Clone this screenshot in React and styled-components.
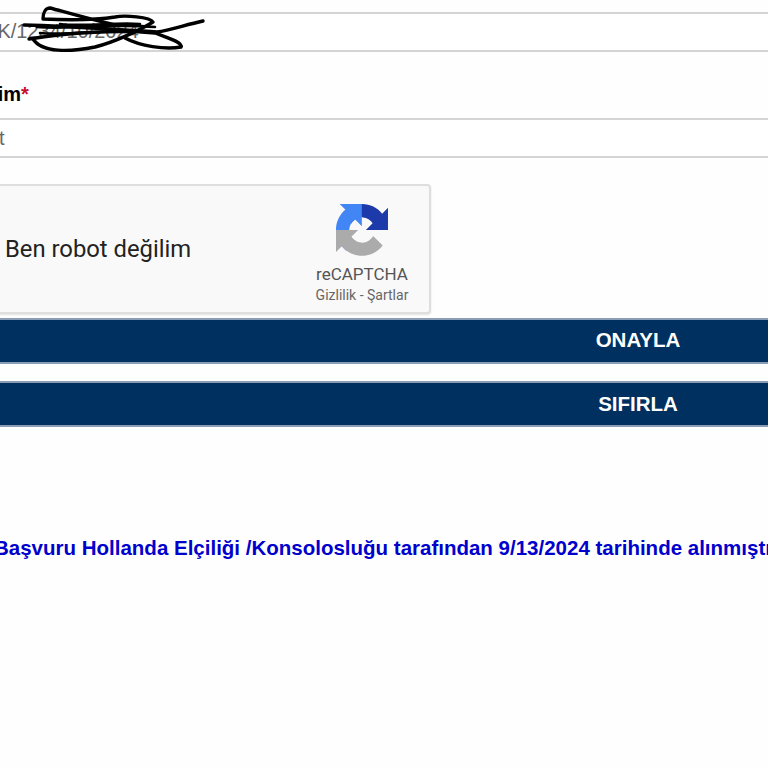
import React from 'react';
import styled, { createGlobalStyle } from 'styled-components';

const GlobalStyle = createGlobalStyle`
  * {
    margin: 0;
    padding: 0;
    box-sizing: border-box;
  }
  html, body {
    width: 768px;
    height: 768px;
    overflow: hidden;
    background: #fefefe;
    font-family: 'Liberation Sans', Arial, sans-serif;
  }
`;

const Viewport = styled.div`
  width: 768px;
  height: 768px;
  overflow: hidden;
`;

/* the form is wider than the window, it was cropped in the screenshot */
const Form = styled.form`
  display: flex;
  flex-direction: column;
  width: 1356px;
  margin-left: -40px;
  padding-top: 12px;
`;

const FieldWrap = styled.div`
  position: relative;
`;

const TextInput = styled.input`
  display: block;
  width: 100%;
  height: 40px;
  padding-left: ${(p) => p.$indent}px;
  padding-bottom: ${(p) => p.$lift || 0}px;
  border: none;
  border-top: 2px solid #d4d4d4;
  border-bottom: 2px solid #d4d4d4;
  outline: none;
  background: #fff;
  font-family: inherit;
  font-size: 20px;
  color: #666;
`;

const Scribble = styled.svg`
  position: absolute;
  top: -12px;
  left: 40px;
  width: 210px;
  height: 64px;
  pointer-events: none;
`;

const Label = styled.label`
  display: block;
  margin-top: 31px;
  height: 35px;
  padding-left: 21px;
  font-size: 20px;
  line-height: 23px;
  font-weight: 700;
  color: #000;
`;

const Required = styled.span`
  color: #c8102e;
  font-weight: 700;
`;

const CaptchaBox = styled.div`
  display: flex;
  align-items: stretch;
  justify-content: space-between;
  width: 471px;
  height: 130px;
  margin-top: 26px;
  margin-bottom: 1px;
  padding-left: 43px;
  background: #f9f9f9;
  border: 2px solid #dedede;
  border-radius: 4px;
  box-shadow: 0 1px 2px rgba(0, 0, 0, 0.12);
  font-family: Roboto, 'Liberation Sans', sans-serif;
`;

const CaptchaText = styled.span`
  align-self: center;
  font-size: 23.8px;
  color: #222;
`;

const CaptchaBrand = styled.div`
  display: flex;
  flex-direction: column;
  align-items: center;
  width: 134px;
  padding-top: 18px;
`;

const BrandName = styled.span`
  margin-top: 8px;
  font-size: 17px;
  line-height: 20px;
  color: #555;
`;

const BrandLinks = styled.span`
  margin-top: 3px;
  font-size: 14px;
  line-height: 16px;
  color: #666;
`;

const Bar = styled.button`
  display: block;
  width: 100%;
  height: 46px;
  margin-top: ${(p) => p.$gap}px;
  padding-bottom: ${(p) => p.$lift || 0}px;
  border: none;
  border-top: 2px solid #8b9db4;
  border-bottom: 2px solid #8b9db4;
  background: #003060;
  color: #fff;
  font-family: inherit;
  font-size: 20.5px;
  font-weight: 700;
`;

const Notice = styled.p`
  margin-top: 109px;
  padding-left: 34px;
  white-space: nowrap;
  font-size: 20.5px;
  line-height: 24px;
  font-weight: 700;
  color: #0000cd;
`;

const RecaptchaLogo = () => (
  <svg width="52" height="52" viewBox="0 0 64 64">
    <path fill="#1c3aa9" d="M64 31.955l-.033-1.37V4.687l-7.16 7.16C50.948 4.674 42.033.093 32.05.093 21.64.093 12.39 5.05 6.544 12.727l11.736 11.86a15.55 15.55 0 0 1 4.753-5.333c2.05-1.6 4.952-2.906 8.99-2.906.488 0 .864.057 1.14.164 5.002.395 9.338 3.152 11.89 7.15l-8.307 8.307c10.522-.04 22.408-.065 32.246-.014" />
    <path fill="#4285f4" d="M31.8.002l-1.37.033H4.53l7.16 7.16C4.517 13.054-.064 21.97-.064 31.95c0 10.41 4.958 19.66 12.635 25.506l11.86-11.736a15.55 15.55 0 0 1-5.333-4.753c-1.6-2.05-2.906-4.952-2.906-8.99 0-.488.057-.864.164-1.14.395-5.002 3.152-9.338 7.15-11.89l8.307 8.307c-.04-10.522-.065-22.408-.014-32.246" />
    <path fill="#ababab" d="M-.001 31.953l.033 1.37v25.898l7.16-7.16c5.86 7.173 14.774 11.754 24.76 11.754 10.41 0 19.66-4.958 25.506-12.635l-11.736-11.86a15.55 15.55 0 0 1-4.753 5.333c-2.05 1.6-4.952 2.906-8.99 2.906-.488 0-.864-.057-1.14-.164-5.002-.395-9.338-3.152-11.89-7.15l8.307-8.307c-10.522.04-22.408.065-32.246.014" />
  </svg>
);

const ScribbleMark = () => (
  <Scribble viewBox="0 0 210 64" fill="none" stroke="#000" strokeWidth="3.4" strokeLinecap="round" strokeLinejoin="round">
    <path d="M203 21 C185 25 170 30 157 32 C120 30 70 26 24 25" />
    <path d="M33 39 C42 53 70 52 95 47 C115 42 140 30 153 22 C150 17 125 15 115 17 C90 21 65 20 43 19 C43 12 46 8 50 8 C65 12 85 18 115 25" />
    <path d="M125 38 C140 46 165 50 181 47 C183 42 165 37 155 33 C120 30 70 32 29 39" />
    <path d="M37 27 C70 30 110 23 155 27 M40 33 C70 36 115 28 150 32 M60 24 C85 27 115 22 140 24" strokeWidth="2.6" />
  </Scribble>
);

const App = () => {
  return (
    <Viewport>
      <GlobalStyle />
      <Form onSubmit={(e) => e.preventDefault()}>
        <FieldWrap>
          <TextInput $indent={23} $lift={2} readOnly value="NK/1234/10/2024" />
          <ScribbleMark />
        </FieldWrap>
        <Label htmlFor="name">
          İsim<Required>*</Required>
        </Label>
        <TextInput id="name" $indent={8} readOnly value="Test" />
        <CaptchaBox>
          <CaptchaText>Ben robot değilim</CaptchaText>
          <CaptchaBrand>
            <RecaptchaLogo />
            <BrandName>reCAPTCHA</BrandName>
            <BrandLinks>Gizlilik - Şartlar</BrandLinks>
          </CaptchaBrand>
        </CaptchaBox>
        <Bar $gap={3} $lift={2} type="submit">ONAYLA</Bar>
        <Bar $gap={17} type="reset">SIFIRLA</Bar>
        <Notice>Başvuru Hollanda Elçiliği /Konsolosluğu tarafından 9/13/2024 tarihinde alınmıştır</Notice>
      </Form>
    </Viewport>
  );
};

export default App;
